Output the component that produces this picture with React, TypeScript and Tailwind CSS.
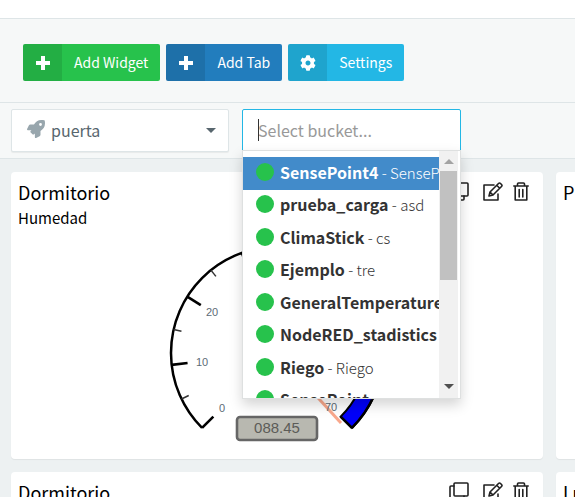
import React from "react";
import { FaCog, FaRocket } from "react-icons/fa";

const buckets = [
  { name: "SensePoint4", id: "SensePoint4" },
  { name: "prueba_carga", id: "asd" },
  { name: "ClimaStick", id: "cs" },
  { name: "Ejemplo", id: "tre" },
  { name: "GeneralTemperature", id: "General" },
  { name: "NodeRED_stadistics", id: "NodeRED" },
  { name: "Riego", id: "Riego" },
  { name: "SensePoint", id: "" },
];

const CX = 277;
const CY = 181;
const R = 106;

function polar(value: number, radius: number) {
  const a = ((135 + (value * 270) / 70) * Math.PI) / 180;
  return [CX + radius * Math.cos(a), CY + radius * Math.sin(a)];
}

function arc(from: number, to: number, radius: number, sweep = 1) {
  const [x1, y1] = polar(from, radius);
  const [x2, y2] = polar(to, radius);
  const large = Math.abs(to - from) > 46.7 ? 1 : 0;
  return { x1, y1, d: `A${radius} ${radius} 0 ${large} ${sweep} ${x2} ${y2}` };
}

function Gauge() {
  const outline = arc(0, 70, R);
  const zoneOuter = arc(60, 70, R);
  const zoneInner = arc(70, 60, 90, 0);
  const ticks = Array.from({ length: 15 }, (_, i) => i * 5);
  return (
    <svg viewBox="11 60 532 227" className="block h-[227px] w-full" aria-label="Humedad 088.45" role="img">
      <path
        d={`M${zoneOuter.x1} ${zoneOuter.y1}${zoneOuter.d}L${zoneInner.x1} ${zoneInner.y1}${zoneInner.d}Z`}
        fill="#0000fa"
        stroke="#000"
        strokeWidth="2"
      />
      <path d={`M${outline.x1} ${outline.y1}${outline.d}`} fill="none" stroke="#000" strokeWidth="2.5" />
      {ticks.map((v) => {
        const major = v % 10 === 0;
        const [x1, y1] = polar(v, R);
        const [x2, y2] = polar(v, major ? 90 : 98);
        return (
          <line key={v} x1={x1} y1={y1} x2={x2} y2={y2} stroke={major ? "#000" : "#333"} strokeWidth={major ? 2.6 : 1.5} />
        );
      })}
      <line x1={CX} y1={CY} x2="341" y2="251" stroke="#f9a88c" strokeWidth="3" />
      <g fontFamily="'Liberation Sans', Arial, sans-serif" fontSize="11" fill="#5d6b76" textAnchor="middle">
        <text x="222" y="240">0</text>
        <text x="202" y="194">10</text>
        <text x="212" y="144">20</text>
        <text x="331" y="239">70</text>
      </g>
      <rect x="237" y="245" width="80" height="23" rx="3" fill="#b8b8b0" stroke="#666" strokeWidth="2.6" />
      <text x="277" y="261" fontFamily="'Liberation Sans', Arial, sans-serif" fontSize="15" fill="#5c5c58" textAnchor="middle">
        088.45
      </text>
    </svg>
  );
}

const line = { fill: "none", stroke: "#222", strokeWidth: 1.6, strokeLinejoin: "round", strokeLinecap: "round" } as const;

function PlusIcon() {
  return (
    <svg width="14" height="14" viewBox="0 0 14 14" fill="none" stroke="currentColor" strokeWidth="4">
      <path d="M7 0V14M0 7H14" />
    </svg>
  );
}

function CloneIcon() {
  return (
    <svg width="20" height="20" viewBox="0 0 20 20" {...line}>
      <rect x="5" y="1" width="14" height="13" rx="1" />
      <path d="M5 4H2Q1 4 1 5V17Q1 18 2 18H14Q15 18 15 17V14" />
    </svg>
  );
}

function EditIcon() {
  return (
    <svg width="20" height="20" viewBox="0 0 20 20" {...line}>
      <path d="M11 3H1V18H15V12" />
      <path d="M7 10 15.5 1.5Q16.5.5 17.5 1.5L18.5 2.5Q19.5 3.5 18.5 4.5L10 13 6 14ZM13.7 3.3 16.7 6.3M7.5 10.5 9.5 12.5" />
    </svg>
  );
}

function TrashIcon() {
  return (
    <svg width="16" height="20" viewBox="0 0 16 20" {...line}>
      <path d="M.8 4H15.2M4.5 4V2Q4.5 1 5.5 1H10.5Q11.5 1 11.5 2V4M2.2 4V18H13.8V4M6.2 7.5V15M9.8 7.5V15" />
    </svg>
  );
}

function Card({ title, subtitle, children }: { title: string; subtitle?: string; children?: React.ReactNode }) {
  return (
    <section className="h-[287px] overflow-hidden rounded-sm bg-white shadow-[0_1px_1px_rgba(0,0,0,0.06)]">
      <header className="flex h-[60px] items-start justify-between pt-[7px] pr-[14px] pl-[7px] text-black">
        <div>
          <h2 className="text-[18px] leading-[27px]">{title}</h2>
          <p className="text-[15px] leading-[23px]">{subtitle}</p>
        </div>
        <div className="flex items-center pt-[3px]">
          <button aria-label="Clone" className="mr-[14px]"><CloneIcon /></button>
          <button aria-label="Edit" className="mr-[10px]"><EditIcon /></button>
          <button aria-label="Delete"><TrashIcon /></button>
        </div>
      </header>
      {children}
    </section>
  );
}

function ToolButton({ tone, icon, children }: { tone: string; icon: React.ReactNode; children: React.ReactNode }) {
  return (
    <button className={`flex h-[37px] items-center overflow-hidden rounded-xs text-[14px] text-white ${tone}`}>
      <span className="flex h-full w-[39px] items-center justify-center bg-black/10 text-[16px]">{icon}</span>
      <span className="px-3">{children}</span>
    </button>
  );
}

export default function App() {
  return (
    <div className="h-screen overflow-hidden bg-[#edf1f2] font-['Noto_Sans_CJK_SC',sans-serif] text-[#58666e]">
      <div className="h-[19px] border-b border-[#dee5e7] bg-white shadow-[0_1px_2px_rgba(0,0,0,0.08)]" />
      <div className="flex h-[84px] items-start gap-[6px] border-b border-[#dee5e7] bg-[#f6f8f8] pt-[25px] pl-[23px]">
        <ToolButton tone="bg-[#27c24c]" icon={<PlusIcon />}>Add Widget</ToolButton>
        <ToolButton tone="bg-[#227dbd]" icon={<PlusIcon />}>Add Tab</ToolButton>
        <ToolButton tone="bg-[#23b7e5]" icon={<FaCog />}>Settings</ToolButton>
      </div>
      <div className="flex h-14 items-start gap-[13px] border-b border-[#dee5e7] bg-[#f6f8f8] px-[11px] pt-[6px]">
        <div className="relative w-[218px]">
          <FaRocket className="absolute top-[11px] left-4 size-[18px] text-[#98a6ad]" />
          <select aria-label="Dashboard" className="h-[43px] w-full appearance-none rounded-xs border border-[#dee5e7] bg-white pb-px pl-[39px] text-[16px] shadow-[0_1px_1px_rgba(0,0,0,0.06)]">
            <option>puerta</option>
          </select>
          <span className="absolute top-[19px] right-[13px] border-x-[5px] border-t-[5px] border-x-transparent border-t-[#58666e]" />
        </div>
        <div className="relative w-[219px]">
          <input
            aria-label="Bucket"
            placeholder="Select bucket..."
            className="h-[43px] w-full rounded-t-xs border border-[#23b7e5] bg-white px-[15px] pb-[2px] text-[16px] outline-none placeholder:text-[#999]"
          />
          <span className="absolute top-[10px] left-4 h-[22px] w-px bg-[#333]" />
          <div className="absolute top-[41px] right-0 left-0 z-10 flex h-[249px] border border-[#dee0e0] bg-white shadow-[0_6px_12px_rgba(0,0,0,0.17)]">
            <ul role="listbox" aria-label="Buckets" className="min-w-0 flex-1 overflow-hidden pt-[6px] text-[#333]">
              <div className="grid h-[260px] grid-rows-8">
                {buckets.map((b, i) => (
                  <li
                    key={b.name}
                    role="option"
                    aria-selected={i === 0}
                    className={`flex items-center overflow-hidden pb-[3px] pl-[13px] whitespace-nowrap ${i === 0 ? "bg-[#428bca] text-white" : ""}`}
                  >
                    <span className="mr-[6px] size-[18px] shrink-0 rounded-full bg-[#27c24c]" />
                    <span className="text-[15px] font-light">
                      <b className="text-[16px] leading-[26px] font-bold">{b.name}</b>
                      {b.id && <> - {b.id}</>}
                    </span>
                  </li>
                ))}
              </div>
            </ul>
            <div className="mr-[2px] flex w-[19px] flex-col items-center bg-[#f1f1f1]">
              <span className="mt-[8px] mb-[7px] border-x-[5px] border-b-[5px] border-x-transparent border-b-[#a3a3a3]" />
              <span className="h-[109px] w-[17px] bg-[#c1c1c1]" />
              <span className="mt-auto mb-[9px] border-x-[5px] border-t-[5px] border-x-transparent border-t-[#505050]" />
            </div>
          </div>
        </div>
      </div>
      <main className="grid auto-rows-auto grid-cols-[calc(100%-21px)_calc(100%-21px)] gap-[13px] px-[11px] pt-[13px]">
        <Card title="Dormitorio" subtitle="Humedad"><Gauge /></Card>
        <Card title="P" />
        <Card title="Dormitorio" subtitle="Humedad" />
        <Card title="Lu" />
      </main>
    </div>
  );
}
